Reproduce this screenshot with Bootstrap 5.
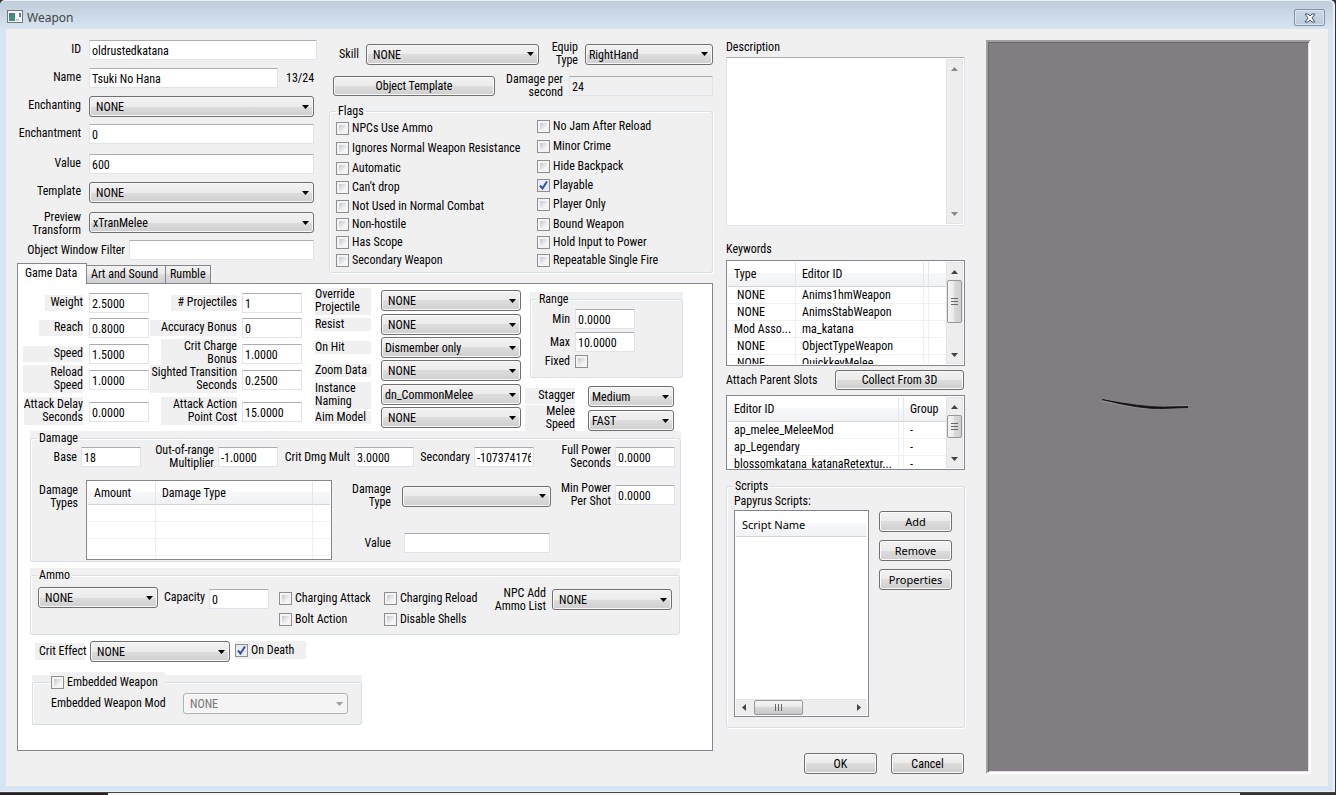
<!DOCTYPE html>
<html lang="en">
<head>
<meta charset="utf-8">
<meta name="viewport" content="width=device-width, initial-scale=1">
<title>Weapon</title>
<link rel="stylesheet" href="https://cdn.jsdelivr.net/npm/bootstrap@5.3.0/dist/css/bootstrap.min.css">
<style>
  :root { --face: #f0f0f0; --glass: #d7e4f2; --etch: #d5dfe5; --sunken: #828790; }
  body { font: 12px/13px "Roboto Condensed", Roboto, "Liberation Sans", sans-serif; color: #000; background: #333; }
  label, legend { white-space: nowrap; }

  /* window frame */
  .win { min-height: calc(100vh - 3px); background: var(--glass); border-radius: 5px 5px 0 0; border: solid #e8f0f8; border-width: 1px 2px 1px 0; margin-right: 1px; box-shadow: 0 1px 0 #444; }
  .titlebar { height: 28px; padding: 5px 8px 0 7px; background: linear-gradient(#bfcddb, #d7e4f2); border-radius: 5px 5px 0 0; }
  .title-text { font: 12px/16px "Noto Sans", "Open Sans", sans-serif; color: #444; }
  .close-btn { width: 31px; height: 17px; margin-top: 3px; border: 1px solid #8391a8; border-radius: 2px; background: linear-gradient(#cbd7e5, #bccbdc); box-shadow: inset 0 0 0 1px #dce6f1; }
  .client { margin: 0 5px 5px 6px; padding: 11px 17px 12px 11px; background: var(--face); display: grid; grid-template-columns: 696px 239px minmax(200px, 1fr); }
  .col-mid { margin-left: 13px; width: 239px; }
  .col-view { margin-left: 34px; }
  .desktop-strip { height: 2px; margin-top: 1px; }
  .strip-dark { width: 108px; background: #2b2327; }
  .strip-dark.end { width: 96px; background: #333; }
  .strip-light { background: #f4f4f4; }

  /* controls */
  .field { height: 20px; padding: 1px 2px 0; border: 1px solid #e2e3ea; border-top-color: #abadb3; border-radius: 1px; background: #fff; color: #000; width: 60px; line-height: 17px; outline: 0; }
  .field.readonly { background: var(--face); }
  .combo { appearance: none; height: 21px; padding: 1px 18px 0 3px; border: 1px solid #707070; border-radius: 3px; color: #000; line-height: 18px; box-shadow: inset 0 0 0 1px #f8f8f8;
    background: url("data:image/svg+xml,%3Csvg xmlns='http://www.w3.org/2000/svg' width='7' height='4'%3E%3Cpath d='M0 0h7L3.500 4z'/%3E%3C/svg%3E") right 4px center no-repeat, linear-gradient(#f2f2f2, #ebebeb 50%, #dddddd 50%, #cfcfcf); }
  .combo.blank { padding-left: 6px; }
  .combo:disabled { opacity: 1; color: #777; border-color: #adb2b5;
    background: url("data:image/svg+xml,%3Csvg xmlns='http://www.w3.org/2000/svg' width='7' height='4'%3E%3Cpath fill='%23a0a0a0' d='M0 0h7L3.500 4z'/%3E%3C/svg%3E") right 4px center no-repeat, #f4f4f4; }
  .push { height: 21px; padding: 0; border: 1px solid #707070; border-radius: 3px; color: #000; line-height: 18px; box-shadow: inset 0 0 0 1px #fbfbfb; background: linear-gradient(#f2f2f2, #ebebeb 50%, #dddddd 50%, #cfcfcf); width: 73px; }
  .push.slim { height: 20px; }
  .tahoma { font-family: "Noto Sans", "Open Sans", sans-serif; font-size: 11px; }
  .tick { appearance: none; flex: none; width: 13px; height: 13px; margin: 0; border: 1px solid #8e8f8f; background: linear-gradient(135deg, #c2c7d0, #f6f6f6 80%) content-box, #f4f4f4; padding: 2px; }
  .tick:checked { background: url("data:image/svg+xml,%3Csvg xmlns='http://www.w3.org/2000/svg' width='9' height='9'%3E%3Cpath fill='none' stroke='%233c539c' stroke-width='2' d='M1 4.500l2.500 3L8 .500'/%3E%3C/svg%3E") center no-repeat, #e8ebf3; }
  .check { display: flex; align-items: center; gap: 3px; height: 13px; }
  fieldset.group { border: 1px solid var(--etch); border-radius: 3px; box-shadow: inset 1px 1px #fff, 1px 1px #fff; }
  .group > legend { float: none; width: auto; margin: 0 0 0 6px; padding: 0 2px; font-size: 12px; line-height: 12px; }
  .plate { background: var(--face); }
  .two { text-align: right; white-space: normal; }

  /* identity fields */
  .wide { width: 225px; }
  .w-name { width: 189px; } .w-filter { width: 185px; } .w-id { width: 228px; }
  .general { width: 300px; display: grid; grid-template-columns: 64px 1fr; column-gap: 8px; grid-template-rows: repeat(3, 28px) 30px 28px 30px 28px 23px; align-items: start; }
  .general > label { justify-self: end; padding-top: 3px; }
  .general > .two { margin-top: -4px; }
  .filter-row { grid-column: span 2; margin-right: 3px; }

  /* skill, damage per second, flags */
  .header-right { width: 384px; padding-top: 1px; }
  .skill-row { display: grid; grid-template-columns: 30px 173px 32px 128px; column-gap: 7px; align-items: center; justify-content: end; height: 26px; }
  .dps-row { display: grid; grid-template-columns: 162px 62px 144px; column-gap: 6px; align-items: center; justify-content: end; height: 26px; margin-top: 6px; }
  .flags { height: 168px; margin-top: 6px; }
  .flags-a { display: grid; width: 203px; padding: 5px 0 0 6px; grid-template-rows: repeat(2, 20px) repeat(2, 19px) repeat(4, 18px); align-items: start; }
  .flags-b { display: grid; padding-top: 3px; grid-template-rows: repeat(2, 20px) repeat(2, 19px) 20px repeat(3, 18px); align-items: start; }

  /* tabs and the tab sheet */
  .tabs { height: 20px; }
  .tab { height: 18px; padding: 0 4px; border: 1px solid var(--sunken); border-bottom: 0; margin-left: -1px; background: linear-gradient(#f2f2f2, #ebebeb 50%, #dddddd 50%, #cfcfcf); line-height: 17px; color: #000; text-decoration: none; }
  .tab-art { width: 80px; } .tab-rumble { width: 46px; }
  .tab.current { height: 21px; width: 70px; margin: 0 0 -1px; padding: 0 7px; background: #fff; position: relative; line-height: 19px; }
  .sheet { background: #fff; border: 1px solid var(--sunken); margin-bottom: 23px; }
  .stats { display: grid; grid-template-columns: 68px 60px 93px 60px; grid-template-rows: 25px 26px 26px 32px 20px; align-items: start; padding: 9px 0 0 3px; }
  .stats > label, .melee > label { justify-self: end; margin: 2px 6px 0 0; height: 16px; padding-top: 1px; text-align: right; background: var(--face); }
  .stats > label.two { margin-top: -5px; height: 28px; }
  .stats > label:nth-of-type(even) { margin-right: 5px; }
  .l38 { width: 38px; } .l44 { width: 44px; } .l47 { width: 47px; } .l60 { width: 60px; } .l66 { width: 66px; } .l76 { width: 76px; } .l86 { width: 87px; }
  .links { display: grid; grid-template-columns: 66px 140px; grid-template-rows: 24px 23px 23px 24px 23px 21px; align-items: start; padding-top: 6px; margin-left: 13px; }
  .links > label { width: 56px; height: 13px; margin-top: 4px; background: var(--face); }
  .links > label.pair { height: 27px; margin-top: -2px; white-space: normal; }
  .range-plate { width: 153px; height: 86px; margin: 8px 0 0 5px; padding-top: 1px; }
  .range-grid { display: grid; grid-template-columns: 42px 60px; column-gap: 2px; row-gap: 3px; padding-top: 4px; align-items: center; }
  .range-grid > label { text-align: right; padding-right: 3px; }
  .melee { display: grid; grid-template-columns: 50px 86px; column-gap: 13px; row-gap: 3px; margin-top: 8px; align-items: start; height: 45px; }
  .melee > label { margin-right: 0; width: 50px; }
  .melee > label.two { height: 26px; margin-top: -5px; padding: 0 0 0 18px; }

  /* damage */
  .damage-plate { width: 651px; height: 131px; margin-left: 12px; padding-top: 1px; }
  .damage-row { display: grid; grid-template-columns: 50px 60px 77px 60px 76px 60px 60px 60px 81px 60px; align-items: center; height: 26px; }
  .damage-row > label { text-align: right; padding-right: 4px; }
  .types-row { margin-top: 10px; }
  .types-label { margin-top: 4px; }
  .types-table { width: 246px; height: 80px; }
  .types-edit { width: 219px; display: grid; grid-template-columns: 59px 149px; column-gap: 11px; row-gap: 24px; padding-top: 3px; align-items: center; }
  .types-power { padding-top: 2px; gap: 4px; }
  .value-field { width: 146px; margin-left: 2px; }

  /* ammo, critical effect, embedded weapon */
  .ammo-plate { width: 650px; height: 67px; margin: 6px 0 0 12px; padding-top: 1px; }
  .ammo-row { display: grid; grid-template-columns: 120px 51px 60px 223px 60px 120px; padding: 6px 0 0 7px; align-items: start; }
  .ammo-row > .field { margin-top: 2px; }
  .ammo-row > .two { padding-right: 6px; }
  .ammo-row > .npc { margin-top: 2px; }
  .ammo-checks { padding: 5px 0 0 10px; display: grid; grid-template-columns: 105px 100px; row-gap: 8px; }
  .crit-row { margin: 6px 0 0 17px; gap: 5px; }
  .crit-label { width: 50px; height: 17px; padding: 2px 0 0 4px; margin-top: 2px; }
  .crit-combo { width: 140px; }
  .death { width: 71px; height: 18px; }
  .embed-plate { width: 330px; height: 50px; margin: 13px 0 0 14px; }
  .embed-plate .group > legend { margin-left: 17px; padding: 0 7px 0 1px; background: var(--face); box-shadow: 0 -3px var(--face); }
  .embed-plate .check { height: 14px; }
  .embed-row { padding: 4px 0 0 18px; }
  .embed-row .combo { width: 165px; margin-left: auto; margin-right: 13px; }

  /* list views and scroll bars */
  .listview { border: 1px solid var(--sunken); background: #fff; padding: 1px; overflow: hidden; }
  .grid-table { table-layout: fixed; width: 100%; border-collapse: separate; border-spacing: 0; }
  .grid-table th { height: 25px; padding: 0 0 0 6px; font-weight: 400; border-bottom: 1px solid #d5d5d5; border-right: 1px solid #e4e6ea; background: linear-gradient(#fff 45%, #f7f8fa 45%, #f1f2f4); }
  .grid-table td { height: 17px; padding: 0 0 0 6px; border-right: 1px solid #f0f0f0; border-bottom: 1px solid #f0f0f0; white-space: nowrap; overflow: hidden; }
  .grid-table td.none { padding-left: 9px; }
  .types-table th { height: 23px; }
  .grid-table th:last-child, .grid-table td:last-child { border-right: 0; }
  .c-amount { width: 68px; } .c-type { width: 157px; } .c-kind { width: 68px; } .c-editor { width: 128px; } .c-gap { width: 5px; } .c-slot { width: 171px; }
  .vbar { width: 17px; flex: none; background: #ededed; border: 1px solid #e3e3e3; display: flex; flex-direction: column; align-items: center; }
  .vbar svg, .hbar svg { flex: none; }
  .thumb { border: 1px solid #979797; border-radius: 2px; background: linear-gradient(90deg, #f5f5f5, #e9e9e9 50%, #d9d9d9 50%, #cfcfcf); display: flex; align-items: center; justify-content: center; width: 15px; }
  .thumb.h { background: linear-gradient(#f5f5f5, #e9e9e9 50%, #d9d9d9 50%, #c8c8c8); width: 49px; height: 15px; }
  .thumb-kw { height: 43px; } .thumb-slot { height: 23px; }
  .hbar { height: 16px; background: #ededed; border-top: 1px solid #e3e3e3; }
  .memo { height: 169px; margin-top: 3px; border: 1px solid #e2e3ea; border-top-color: #abadb3; background: #fff; padding: 1px; }
  .memo textarea { border: 0; resize: none; outline: 0; overflow: hidden; }
  .desc-label { padding-top: 1px; }
  .kw-label { margin-top: 17px; }
  .kw-list { height: 106px; margin-top: 4px; }
  .slot-head { margin-top: 4px; margin-right: 1px; }
  .slot-list { height: 75px; margin-top: 5px; }
  .collect { width: 129px; }
  .scripts { height: 248px; margin-top: 10px; }
  .scripts-body { padding: 3px 0 0 7px; }
  .script-list { width: 135px; height: 207px; margin-top: 2px; }
  .script-buttons { gap: 8px; padding-top: 3px; margin-left: 10px; }
  .ok-row { gap: 14px; margin-right: 1px; }
  .viewport3d { border: 2px solid; border-color: #a0a0a0 #fff #fff #a0a0a0; background: #827d82; box-shadow: inset 1px 1px #696969, inset -1px -1px #e3e3e3; }
</style>
</head>
<body>
<main class="win d-flex flex-column">
  <header class="titlebar d-flex align-items-start">
    <svg class="mt-1" width="16" height="14" viewBox="0 0 16 14" aria-hidden="true"><rect x=".5" y=".5" width="15" height="12" fill="#f6f6f6" stroke="#777"/><rect x="2" y="3" width="6" height="8" fill="#3f8f80"/><path d="M2 3h4l-4 5z" fill="#4d72a8"/><rect x="9" y="3" width="3" height="8" fill="#fff"/><path d="M13 3v4" stroke="#2450a0" stroke-width="1.500"/><rect x="9" y="9" width="3" height="2" fill="#ccc"/></svg>
    <span class="title-text ms-1 mt-1">Weapon</span>
    <button class="close-btn ms-auto p-0 d-flex align-items-center justify-content-center" aria-label="Close"><svg width="12" height="10" viewBox="0 0 12 10"><path d="M1 1h3l2 2 2-2h3L8 5l3 4H8L6 7 4 9H1l3-4z" fill="#fff" stroke="#49556b"/></svg></button>
  </header>

  <form class="client flex-grow-1" onsubmit="return false">
    <section class="d-flex flex-column">
      <div class="d-flex justify-content-between">
        <div>
          <div class="general">
            <label for="fid">ID</label><input id="fid" class="field w-id" value="oldrustedkatana">
            <label for="fname">Name</label><div class="d-flex align-items-center"><input id="fname" class="field w-name" value="Tsuki No Hana"><span class="ms-2">13/24</span></div>
            <label for="fench">Enchanting</label><select id="fench" class="combo blank wide"><option>NONE</option></select>
            <label for="fencm">Enchantment</label><input id="fencm" class="field wide" value="0">
            <label for="fval">Value</label><input id="fval" class="field wide" value="600">
            <label for="ftmp">Template</label><select id="ftmp" class="combo blank wide"><option>NONE</option></select>
            <label for="fprev" class="two">Preview Transform</label><select id="fprev" class="combo wide"><option>xTranMelee</option></select>
            <div class="filter-row d-flex align-items-center justify-content-end"><label for="ffil" class="pe-1">Object Window Filter</label><input id="ffil" class="field w-filter"></div>
          </div>
          <nav class="tabs d-flex align-items-end">
            <a href="#game" class="tab current">Game Data</a><a href="#art" class="tab tab-art">Art and Sound</a><a href="#rumble" class="tab tab-rumble">Rumble</a>
          </nav>
        </div>

        <div class="header-right">
          <div class="skill-row">
            <label for="fskill" class="text-end">Skill</label><select id="fskill" class="combo blank"><option>NONE</option></select>
            <label for="fequip" class="two">Equip Type</label><select id="fequip" class="combo"><option>RightHand</option></select>
          </div>
          <div class="dps-row">
            <button class="push slim w-auto">Object Template</button>
            <label for="fdps" class="two">Damage per second</label><input id="fdps" class="field readonly w-auto" value="24" readonly size="10">
          </div>
          <fieldset class="group flags"><legend>Flags</legend>
            <div class="d-flex">
              <div class="flags-a">
                <label class="check"><input type="checkbox" class="tick">NPCs Use Ammo</label>
                <label class="check"><input type="checkbox" class="tick">Ignores Normal Weapon Resistance</label>
                <label class="check"><input type="checkbox" class="tick">Automatic</label>
                <label class="check"><input type="checkbox" class="tick">Can't drop</label>
                <label class="check"><input type="checkbox" class="tick">Not Used in Normal Combat</label>
                <label class="check"><input type="checkbox" class="tick">Non-hostile</label>
                <label class="check"><input type="checkbox" class="tick">Has Scope</label>
                <label class="check"><input type="checkbox" class="tick">Secondary Weapon</label>
              </div>
              <div class="flags-b ms-1">
                <label class="check"><input type="checkbox" class="tick">No Jam After Reload</label>
                <label class="check"><input type="checkbox" class="tick">Minor Crime</label>
                <label class="check"><input type="checkbox" class="tick">Hide Backpack</label>
                <label class="check"><input type="checkbox" class="tick" checked>Playable</label>
                <label class="check"><input type="checkbox" class="tick">Player Only</label>
                <label class="check"><input type="checkbox" class="tick">Bound Weapon</label>
                <label class="check"><input type="checkbox" class="tick">Hold Input to Power</label>
                <label class="check"><input type="checkbox" class="tick">Repeatable Single Fire</label>
              </div>
            </div>
          </fieldset>
        </div>
      </div>

      <div class="sheet flex-grow-1" id="game">
        <div class="d-flex align-items-start">
          <div class="stats">
            <label for="s1" class="l38">Weight</label><input id="s1" class="field" value="2.5000">
            <label for="s2" class="l66"># Projectiles</label><input id="s2" class="field" value="1">
            <label for="s3" class="l44">Reach</label><input id="s3" class="field" value="0.8000">
            <label for="s4" class="l86">Accuracy Bonus</label><input id="s4" class="field" value="0">
            <label for="s5" class="l60">Speed</label><input id="s5" class="field" value="1.5000">
            <label for="s6" class="two l76">Crit Charge Bonus</label><input id="s6" class="field" value="1.0000">
            <label for="s7" class="two l60">Reload<br>Speed</label><input id="s7" class="field" value="1.0000">
            <label for="s8" class="two l86">Sighted Transition Seconds</label><input id="s8" class="field" value="0.2500">
            <label for="s9" class="two text-nowrap">Attack Delay<br>Seconds</label><input id="s9" class="field" value="0.0000">
            <label for="s10" class="two l76">Attack Action Point Cost</label><input id="s10" class="field" value="15.0000">
          </div>
          <div class="links">
            <label for="k1" class="pair">Override Projectile</label><select id="k1" class="combo blank"><option>NONE</option></select>
            <label for="k2">Resist</label><select id="k2" class="combo blank"><option>NONE</option></select>
            <label for="k3">On Hit</label><select id="k3" class="combo"><option>Dismember only</option></select>
            <label for="k4">Zoom Data</label><select id="k4" class="combo blank"><option>NONE</option></select>
            <label for="k5" class="pair">Instance Naming</label><select id="k5" class="combo"><option>dn_CommonMelee</option></select>
            <label for="k6">Aim Model</label><select id="k6" class="combo blank"><option>NONE</option></select>
          </div>
          <div class="ms-1">
            <div class="plate range-plate">
              <fieldset class="group h-100"><legend>Range</legend>
                <div class="range-grid">
                  <label for="r1">Min</label><input id="r1" class="field" value="0.0000">
                  <label for="r2">Max</label><input id="r2" class="field" value="10.0000">
                  <label for="r3">Fixed</label><input id="r3" type="checkbox" class="tick">
                </div>
              </fieldset>
            </div>
            <div class="melee">
              <label for="m1">Stagger</label><select id="m1" class="combo"><option>Medium</option></select>
              <label for="m2" class="two">Melee Speed</label><select id="m2" class="combo"><option>FAST</option></select>
            </div>
          </div>
        </div>

        <div class="plate damage-plate">
          <fieldset class="group h-100"><legend>Damage</legend>
            <div class="damage-row">
              <label for="d1">Base</label><input id="d1" class="field" value="18">
              <label for="d2" class="two">Out-of-range Multiplier</label><input id="d2" class="field" value="-1.0000">
              <label for="d3">Crit Dmg Mult</label><input id="d3" class="field" value="3.0000">
              <label for="d4">Secondary</label><input id="d4" class="field" value="-1073741768">
              <label for="d5" class="two">Full Power<br>Seconds</label><input id="d5" class="field" value="0.0000">
            </div>
            <div class="types-row d-flex align-items-start">
              <span class="two types-label l47">Damage Types</span>
              <div class="listview types-table ms-2">
                <table class="grid-table">
                  <colgroup><col class="c-amount"><col class="c-type"><col></colgroup>
                  <thead><tr><th>Amount</th><th>Damage Type</th><th></th></tr></thead>
                  <tbody><tr><td></td><td></td><td></td></tr><tr><td></td><td></td><td></td></tr><tr><td></td><td></td><td></td></tr><tr><td></td><td></td><td></td></tr></tbody>
                </table>
              </div>
              <div class="types-edit">
                <label for="e1" class="two">Damage<br>Type</label><select id="e1" class="combo"><option></option></select>
                <label for="e2" class="text-end">Value</label><input id="e2" class="field value-field">
              </div>
              <div class="types-power d-flex align-items-center">
                <label for="e3" class="two l60">Min Power<br>Per Shot</label><input id="e3" class="field" value="0.0000">
              </div>
            </div>
          </fieldset>
        </div>

        <div class="plate ammo-plate">
          <fieldset class="group h-100"><legend>Ammo</legend>
            <div class="ammo-row">
              <select class="combo blank" aria-label="Ammo"><option>NONE</option></select>
              <label for="a1" class="text-end pe-1 pt-1">Capacity</label><input id="a1" class="field" value="0">
              <div class="ammo-checks">
                <label class="check"><input type="checkbox" class="tick">Charging Attack</label>
                <label class="check"><input type="checkbox" class="tick">Charging Reload</label>
                <label class="check"><input type="checkbox" class="tick">Bolt Action</label>
                <label class="check"><input type="checkbox" class="tick">Disable Shells</label>
              </div>
              <label for="a2" class="two">NPC Add Ammo List</label><select id="a2" class="combo blank npc"><option>NONE</option></select>
            </div>
          </fieldset>
        </div>

        <div class="crit-row d-flex align-items-start">
          <label for="c1" class="plate crit-label">Crit Effect</label>
          <select id="c1" class="combo blank crit-combo"><option>NONE</option></select>
          <label class="check plate death"><input type="checkbox" class="tick" checked>On Death</label>
        </div>

        <div class="plate embed-plate">
          <fieldset class="group h-100">
            <legend><label class="check"><input type="checkbox" class="tick">Embedded Weapon</label></legend>
            <div class="d-flex align-items-center embed-row">
              <label for="g1">Embedded Weapon Mod</label>
              <select id="g1" class="combo blank" disabled><option>NONE</option></select>
            </div>
          </fieldset>
        </div>
      </div>
    </section>

    <section class="col-mid d-flex flex-column">
      <label for="desc" class="desc-label">Description</label>
      <div class="memo d-flex">
        <textarea id="desc" class="flex-grow-1"></textarea>
        <div class="vbar justify-content-between"><svg width="15" height="18"><path d="M4 11h7L7.500 7z" fill="#888"/></svg><svg width="15" height="18"><path d="M4 7h7l-3.500 4z" fill="#888"/></svg></div>
      </div>
      <span class="kw-label">Keywords</span>
      <div class="listview kw-list d-flex">
        <div class="flex-grow-1 overflow-hidden">
          <table class="grid-table">
            <colgroup><col class="c-kind"><col class="c-editor"><col class="c-gap"><col></colgroup>
            <thead><tr><th>Type</th><th>Editor ID</th><th></th><th></th></tr></thead>
            <tbody>
              <tr><td class="none">NONE</td><td>Anims1hmWeapon</td><td></td><td></td></tr>
              <tr><td class="none">NONE</td><td>AnimsStabWeapon</td><td></td><td></td></tr>
              <tr><td>Mod Asso...</td><td>ma_katana</td><td></td><td></td></tr>
              <tr><td class="none">NONE</td><td>ObjectTypeWeapon</td><td></td><td></td></tr>
              <tr><td class="none">NONE</td><td>QuickkeyMelee</td><td></td><td></td></tr>
            </tbody>
          </table>
        </div>
        <div class="vbar"><svg width="15" height="17"><path d="M4 11h7L7.500 7z" fill="#444"/></svg><div class="thumb thumb-kw"><svg width="7" height="8"><path d="M0 .5h7M0 3.500h7M0 6.500h7" stroke="#666"/></svg></div><svg class="mt-auto" width="15" height="17"><path d="M4 7h7l-3.500 4z" fill="#444"/></svg></div>
      </div>
      <div class="d-flex justify-content-between align-items-center slot-head">
        <span>Attach Parent Slots</span><button class="push slim collect">Collect From 3D</button>
      </div>
      <div class="listview slot-list d-flex">
        <div class="flex-grow-1 overflow-hidden">
          <table class="grid-table">
            <colgroup><col class="c-slot"><col class="c-gap"><col></colgroup>
            <thead><tr><th>Editor ID</th><th></th><th>Group</th></tr></thead>
            <tbody>
              <tr><td>ap_melee_MeleeMod</td><td></td><td>-</td></tr>
              <tr><td>ap_Legendary</td><td></td><td>-</td></tr>
              <tr><td>blossomkatana_katanaRetextur...</td><td></td><td>-</td></tr>
            </tbody>
          </table>
        </div>
        <div class="vbar"><svg width="15" height="17"><path d="M4 11h7L7.500 7z" fill="#444"/></svg><div class="thumb thumb-slot"><svg width="7" height="8"><path d="M0 .5h7M0 3.500h7M0 6.500h7" stroke="#666"/></svg></div><svg class="mt-auto" width="15" height="17"><path d="M4 7h7l-3.500 4z" fill="#444"/></svg></div>
      </div>

      <fieldset class="group scripts"><legend>Scripts</legend>
        <div class="scripts-body">
          <div>Papyrus Scripts:</div>
          <div class="d-flex align-items-start">
            <div class="listview script-list d-flex flex-column justify-content-between">
              <table class="grid-table tahoma"><thead><tr><th>Script Name</th></tr></thead></table>
              <div class="hbar d-flex align-items-center"><svg width="18" height="15"><path d="M10 4v7L6 7.500z" fill="#444"/></svg><div class="thumb h"><svg width="8" height="7"><path d="M.5 0v7M3.500 0v7M6.500 0v7" stroke="#666"/></svg></div><svg class="ms-auto" width="18" height="15"><path d="M8 4v7l4-3.500z" fill="#444"/></svg></div>
            </div>
            <div class="script-buttons d-flex flex-column">
              <button class="push tahoma">Add</button>
              <button class="push tahoma">Remove</button>
              <button class="push tahoma">Properties</button>
            </div>
          </div>
        </div>
      </fieldset>
      <div class="ok-row d-flex justify-content-end mt-auto">
        <button class="push">OK</button><button class="push">Cancel</button>
      </div>
    </section>

    <section class="col-view d-flex">
      <div class="viewport3d flex-grow-1 d-flex align-items-center justify-content-center">
        <svg width="96" height="16" viewBox="0 0 96 16" role="img" aria-label="Weapon preview"><path d="M1 1Q40 10 62 8.500L88 7.500" fill="none" stroke="#aaa6a8" stroke-width="3" opacity=".5"/><path d="M1 .5Q40 10.500 62 9.500L87 8.500L87 7.500L62 8Q40 8 1 .5z" fill="#111" stroke="#111" stroke-width=".8"/></svg>
      </div>
    </section>
  </form>
</main>
<div class="desktop-strip d-flex"><div class="strip-dark"></div><div class="strip-light flex-grow-1"></div><div class="strip-dark end"></div></div>
<script src="https://cdn.jsdelivr.net/npm/bootstrap@5.3.0/dist/js/bootstrap.bundle.min.js"></script>
</body>
</html>
